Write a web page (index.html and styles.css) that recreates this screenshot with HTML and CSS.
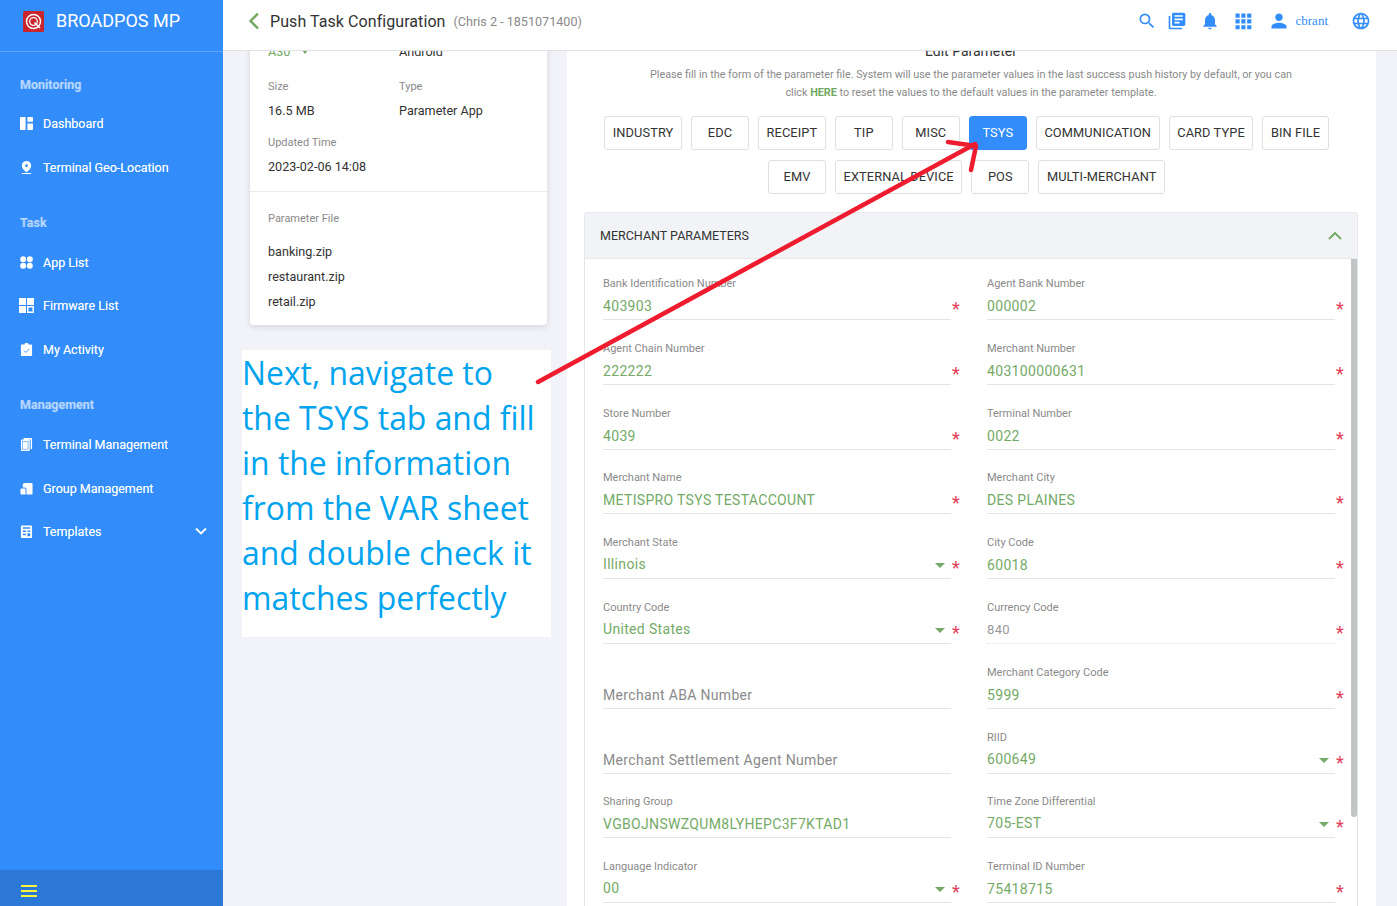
FILE: index.html
```html
<!DOCTYPE html>
<html lang="en">
<head>
<meta charset="utf-8">
<title>Push Task Configuration</title>
<link rel="stylesheet" href="styles.css">
</head>
<body>
<div class="app">
  <aside class="sidebar">
    <div class="brand">
      <svg class="logo" viewBox="0 0 21 21"><rect width="21" height="21" rx="1.5" fill="#c8262c"/><circle cx="10.5" cy="10.5" r="7" fill="none" stroke="#fff" stroke-width="1.5"/><circle cx="10.5" cy="10.5" r="3.8" fill="none" stroke="#fff" stroke-width="1.3"/><path d="M11.5 11.5l5.5 5.5" stroke="#fff" stroke-width="1.6"/></svg>
      <span class="brand-name">BROADPOS MP</span>
    </div>
    <nav class="nav">
      <div class="nav-section">Monitoring</div>
      <a class="nav-item"><svg class="nav-icon" viewBox="0 0 14 14"><path d="M0 1a1 1 0 0 1 1-1h5v14H1a1 1 0 0 1-1-1zM8 0h5a1 1 0 0 1 1 1v4H8zM8 7h6v6a1 1 0 0 1-1 1H8z"/></svg>Dashboard</a>
      <a class="nav-item"><svg class="nav-icon" viewBox="0 0 14 14"><path d="M7 0a5 5 0 0 1 5 5c0 3-3 5.500-5 7-2-1.500-5-4-5-7a5 5 0 0 1 5-5zm0 3.500a1.500 1.500 0 1 0 0 3 1.500 1.500 0 0 0 0-3zM2 12.800h10V14H2z"/></svg>Terminal Geo-Location</a>
      <div class="nav-section nav-gap">Task</div>
      <a class="nav-item"><svg class="nav-icon" viewBox="0 0 14 14"><circle cx="3.400" cy="3.400" r="3.200"/><circle cx="10.600" cy="3.400" r="3.200"/><circle cx="3.400" cy="10.600" r="3.200"/><circle cx="10.600" cy="10.600" r="3.200"/></svg>App List</a>
      <a class="nav-item"><svg class="nav-icon nav-icon-wide" viewBox="0 0 15 15"><path d="M0 0h7v7H0zM8 0h7v7H8zM0 8h7v7H0zM8 8h7v7H8zm1.500 1.500v4h4v-4z" fill-rule="evenodd"/></svg>Firmware List</a>
      <a class="nav-item"><svg class="nav-icon" viewBox="0 0 14 14"><path d="M2 1.500h3a2 2 0 0 1 4 0h3a1 1 0 0 1 1 1V13a1 1 0 0 1-1 1H2a1 1 0 0 1-1-1V2.500a1 1 0 0 1 1-1z"/><path d="M4.300 8.300l1.900 1.900 3.600-3.600" fill="none" stroke="#328dfb" stroke-width="1"/></svg>My Activity</a>
      <div class="nav-section nav-gap">Management</div>
      <a class="nav-item"><svg class="nav-icon" viewBox="0 0 14 14"><path d="M2 1.500h7.500a1 1 0 0 1 1 1V13a1 1 0 0 1-1 1H2a1 1 0 0 1-1-1V2.500a1 1 0 0 1 1-1zM4 0h8a1 1 0 0 1 1 1v11h-1.500V1.500H4z"/><rect x="2.800" y="3.500" width="5.900" height="8.500" fill="none" stroke="#328dfb" stroke-width=".6"/></svg>Terminal Management</a>
      <a class="nav-item"><svg class="nav-icon" viewBox="0 0 14 14"><path d="M5 1h7.500a1 1 0 0 1 1 1v10.500a1 1 0 0 1-1 1H7V8a2 2 0 0 0-2-2H3V3a2 2 0 0 1 2-2zM1.500 7H5a1 1 0 0 1 1 1v5.500H1.500a1 1 0 0 1-1-1V8a1 1 0 0 1 1-1z"/></svg>Group Management</a>
      <a class="nav-item"><svg class="nav-icon" viewBox="0 0 14 14"><path d="M2 .500h10a1 1 0 0 1 1 1V13a1 1 0 0 1-1 1H2a1 1 0 0 1-1-1V1.500a1 1 0 0 1 1-1zM3 2.500V4h8V2.500zM3 6v1.500h3.500V6zM8 6v1.500h3V6zM3 9.500V11h3.500V9.500zM8 9v3h3V9z" fill-rule="evenodd"/></svg>Templates<svg class="nav-caret" viewBox="0 0 12 8"><path d="M1 1.500l5 5 5-5" fill="none" stroke="#fff" stroke-width="1.800"/></svg></a>
    </nav>
    <div class="side-foot"><span class="burger"></span></div>
  </aside>

  <div class="page">
    <header class="topbar">
      <svg class="back" viewBox="0 0 12 18"><path d="M10 1.500L2.500 9l7.500 7.500" fill="none" stroke="#6fa85f" stroke-width="2.400"/></svg>
      <h1 class="title">Push Task Configuration</h1>
      <span class="subtitle">(Chris 2 - 1851071400)</span>
      <div class="tools">
        <svg class="tool tool-search" viewBox="0 0 24 24"><path d="M15.500 14h-.79l-.28-.27A6.470 6.470 0 0 0 16 9.500 6.500 6.500 0 1 0 9.500 16c1.610 0 3.090-.59 4.230-1.570l.27.28v.79l5 4.990L20.490 19l-4.990-5zm-6 0C7.010 14 5 11.990 5 9.500S7.010 5 9.500 5 14 7.010 14 9.500 11.990 14 9.500 14z"/></svg>
        <svg class="tool" viewBox="0 0 24 24"><path d="M4 6H2v14c0 1.100.9 2 2 2h14v-2H4V6zm16-4H8c-1.100 0-2 .9-2 2v12c0 1.100.9 2 2 2h12c1.100 0 2-.9 2-2V4c0-1.100-.9-2-2-2zm-1 9H9V9h10v2zm-4 4H9v-2h6v2zm4-8H9V5h10v2z"/></svg>
        <svg class="tool" viewBox="0 0 24 24"><path d="M12 22c1.100 0 2-.9 2-2h-4c0 1.100.9 2 2 2zm6-6v-5c0-3.070-1.630-5.640-4.500-6.320V4c0-.83-.67-1.500-1.500-1.500s-1.500.67-1.500 1.500v.68C7.640 5.360 6 7.920 6 11v5l-2 2v1h16v-1l-2-2z"/></svg>
        <svg class="tool" viewBox="0 0 24 24"><path d="M3 3h5v5H3zM10 3h5v5h-5zM17 3h5v5h-5zM3 10h5v5H3zM10 10h5v5h-5zM17 10h5v5h-5zM3 17h5v5H3zM10 17h5v5h-5zM17 17h5v5h-5z"/></svg>
        <svg class="tool tool-user" viewBox="0 0 24 24"><path d="M12 12c2.500 0 4.500-2 4.500-4.500S14.500 3 12 3 7.500 5 7.500 7.500 9.500 12 12 12zm0 2c-3 0-9 1.500-9 4.500V21h18v-2.500c0-3-6-4.500-9-4.500z"/></svg>
        <span class="username">cbrant</span>
        <svg class="tool" viewBox="0 0 24 24"><path d="M11.990 2C6.470 2 2 6.480 2 12s4.470 10 9.990 10C17.520 22 22 17.520 22 12S17.520 2 11.990 2zm6.930 6h-2.950a15.650 15.650 0 0 0-1.380-3.560A8.030 8.030 0 0 1 18.920 8zM12 4.040c.83 1.200 1.480 2.530 1.910 3.960h-3.820c.43-1.430 1.080-2.760 1.910-3.960zM4.260 14C4.100 13.360 4 12.690 4 12s.1-1.360.26-2h3.380c-.08.660-.14 1.320-.14 2s.06 1.340.14 2H4.260zm.82 2h2.950c.32 1.250.78 2.450 1.380 3.560A7.987 7.987 0 0 1 5.080 16zm2.950-8H5.080a7.987 7.987 0 0 1 4.330-3.560A15.650 15.650 0 0 0 8.030 8zM12 19.960c-.83-1.200-1.480-2.530-1.910-3.960h3.820c-.43 1.430-1.080 2.760-1.910 3.960zM14.340 14H9.660c-.09-.660-.16-1.320-.16-2s.07-1.350.16-2h4.680c.09.650.16 1.320.16 2s-.07 1.340-.16 2zm.25 5.560c.6-1.110 1.060-2.310 1.380-3.560h2.950a8.030 8.030 0 0 1-4.330 3.560zM16.360 14c.08-.660.14-1.320.14-2s-.06-1.340-.14-2h3.380c.16.640.26 1.310.26 2s-.1 1.360-.26 2h-3.380z"/></svg>
      </div>
    </header>

    <main class="content">
      <div class="columns">
        <div class="left-col">
          <section class="info-card">
            <div class="info-top">
              <div class="info-grid">
                <div class="info-cell info-cell-first"><span class="info-value info-green">A30 <i class="mini-caret"></i></span></div>
                <div class="info-cell info-cell-first"><span class="info-value">Android</span></div>
                <div class="info-cell"><span class="info-label">Size</span><span class="info-value">16.5 MB</span></div>
                <div class="info-cell"><span class="info-label">Type</span><span class="info-value">Parameter App</span></div>
                <div class="info-cell"><span class="info-label">Updated Time</span><span class="info-value">2023-02-06 14:08</span></div>
              </div>
            </div>
            <div class="info-files">
              <span class="info-label">Parameter File</span>
              <ul class="file-list">
                <li>banking.zip</li>
                <li>restaurant.zip</li>
                <li>retail.zip</li>
              </ul>
            </div>
          </section>
          <div class="note">Next, navigate to<br>the TSYS tab and fill<br>in the information<br>from the VAR sheet<br>and double check it<br>matches perfectly</div>
        </div>

        <section class="edit-card">
          <h2 class="edit-title">Edit Parameter</h2>
          <p class="edit-desc">Please fill in the form of the parameter file. System will use the parameter values in the last success push history by default, or you can<br>click <b class="here">HERE</b> to reset the values to the default values in the parameter template.</p>
          <div class="tabs">
            <button class="tab">INDUSTRY</button><button class="tab">EDC</button><button class="tab">RECEIPT</button><button class="tab">TIP</button><button class="tab">MISC</button><button class="tab tab-active">TSYS</button><button class="tab">COMMUNICATION</button><button class="tab">CARD TYPE</button><button class="tab">BIN FILE</button><button class="tab">EMV</button><button class="tab">EXTERNAL DEVICE</button><button class="tab">POS</button><button class="tab">MULTI-MERCHANT</button>
          </div>
          <div class="acc-head">
            <span>MERCHANT PARAMETERS</span>
            <svg class="acc-chevron" viewBox="0 0 14 9"><path d="M1 8l6-6 6 6" fill="none" stroke="#6fa85f" stroke-width="1.800"/></svg>
          </div>
          <div class="acc-body">
            <div class="scrollbar"></div>
            <div class="form">
              <div class="field"><label>Bank Identification Number</label><div class="ctl"><div class="val">403903</div><span class="req">*</span></div></div>
              <div class="field"><label>Agent Bank Number</label><div class="ctl"><div class="val">000002</div><span class="req">*</span></div></div>
              <div class="field"><label>Agent Chain Number</label><div class="ctl"><div class="val">222222</div><span class="req">*</span></div></div>
              <div class="field"><label>Merchant Number</label><div class="ctl"><div class="val">403100000631</div><span class="req">*</span></div></div>
              <div class="field"><label>Store Number</label><div class="ctl"><div class="val">4039</div><span class="req">*</span></div></div>
              <div class="field"><label>Terminal Number</label><div class="ctl"><div class="val">0022</div><span class="req">*</span></div></div>
              <div class="field"><label>Merchant Name</label><div class="ctl"><div class="val">METISPRO TSYS TESTACCOUNT</div><span class="req">*</span></div></div>
              <div class="field"><label>Merchant City</label><div class="ctl"><div class="val">DES PLAINES</div><span class="req">*</span></div></div>
              <div class="field"><label>Merchant State</label><div class="ctl"><div class="val val-select">Illinois<i class="caret"></i></div><span class="req">*</span></div></div>
              <div class="field"><label>City Code</label><div class="ctl"><div class="val">60018</div><span class="req">*</span></div></div>
              <div class="field"><label>Country Code</label><div class="ctl"><div class="val val-select">United States<i class="caret"></i></div><span class="req">*</span></div></div>
              <div class="field"><label>Currency Code</label><div class="ctl"><div class="val val-disabled">840</div><span class="req">*</span></div></div>
              <div class="field"><label></label><div class="ctl"><div class="val val-empty">Merchant ABA Number</div><span class="req"></span></div></div>
              <div class="field"><label>Merchant Category Code</label><div class="ctl"><div class="val">5999</div><span class="req">*</span></div></div>
              <div class="field"><label></label><div class="ctl"><div class="val val-empty">Merchant Settlement Agent Number</div><span class="req"></span></div></div>
              <div class="field"><label>RIID</label><div class="ctl"><div class="val val-select">600649<i class="caret"></i></div><span class="req">*</span></div></div>
              <div class="field"><label>Sharing Group</label><div class="ctl"><div class="val">VGBOJNSWZQUM8LYHEPC3F7KTAD1</div><span class="req"></span></div></div>
              <div class="field"><label>Time Zone Differential</label><div class="ctl"><div class="val val-select">705-EST<i class="caret"></i></div><span class="req">*</span></div></div>
              <div class="field"><label>Language Indicator</label><div class="ctl"><div class="val val-select">00<i class="caret"></i></div><span class="req">*</span></div></div>
              <div class="field"><label>Terminal ID Number</label><div class="ctl"><div class="val">75418715</div><span class="req">*</span></div></div>
            </div>
          </div>
        </section>
      </div>
    </main>
  </div>

  <svg class="arrow" viewBox="0 0 1397 906" aria-hidden="true">
    <path d="M538 382L975 144M948 142L976 146M976 146L971 170" fill="none" stroke="#ee1c2e" stroke-width="4.500" stroke-linecap="round"/>
  </svg>
</div>
</body>
</html>
```
FILE: styles.css
```css
* { box-sizing: border-box; }
html, body { margin: 0; height: 100%; overflow: hidden; }
body { font-family: Roboto, "Liberation Sans", sans-serif; color: #333; background: #f2f3f8; }
.app { position: relative; display: flex; width: 1397px; height: 906px; overflow: hidden; }

/* Sidebar */
.sidebar { width: 223px; flex: none; display: flex; flex-direction: column; background: #328dfb; color: #fff; }
.brand { height: 52px; flex: none; display: flex; align-items: center; padding: 0 0 9px 23px; border-bottom: 1px solid rgba(255,255,255,.22); }
.logo { width: 21px; height: 21px; flex: none; }
.brand-name { margin-left: 12px; font-size: 18px; line-height: 22px; }
.nav { flex: 1; padding-top: 14px; }
.nav-section { height: 36px; display: flex; align-items: center; padding-left: 20px; font-size: 12.5px; font-weight: 700; color: rgba(255,255,255,.5); text-shadow: 0 0 1px rgba(255,255,255,.35); }
.nav-gap { margin-top: 16px; }
.nav-item { height: 43.4px; display: flex; align-items: center; padding-left: 20px; font-size: 12.5px; color: #fff; text-shadow: 0 0 .5px rgba(255,255,255,.6); }
.nav-icon { width: 13px; height: 13px; flex: none; margin-right: 10px; fill: #fff; }
.nav-icon-wide { width: 15px; height: 15px; margin-left: -1px; margin-right: 9px; }
.nav-caret { width: 12px; height: 8px; margin-left: auto; margin-right: 16px; }
.side-foot { height: 36px; flex: none; display: flex; align-items: center; padding: 6px 0 0 21px; background: #2b78d6; }
.burger { display: block; width: 16px; height: 12px; background: linear-gradient(#f4f53c 0 2px, transparent 2px 5px, #f4f53c 5px 7px, transparent 7px 10px, #f4f53c 10px 12px); }

/* Header */
.page { flex: 1; min-width: 0; display: flex; flex-direction: column; }
.topbar { position: relative; z-index: 2; height: 51px; flex: none; display: flex; align-items: center; padding: 0 26px 8px 25px; background: #fff; border-bottom: 1px solid #dfe1e6; }
.back { width: 12px; height: 18px; flex: none; }
.title { margin: 0 0 0 10px; font-size: 16px; font-weight: 400; letter-spacing: .07px; color: #333; }
.subtitle { margin-left: 8px; font-size: 12.6px; color: #8a8a8a; }
.tools { margin-left: auto; display: flex; align-items: center; gap: 13px; }
.tool { width: 20px; height: 20px; flex: none; fill: #328dfb; }
.tool-search { margin-right: -3px; }
.tool-user { margin-left: 3px; }
.username { margin-left: -6px; margin-right: 10px; font-family: "Liberation Serif", serif; font-size: 13px; color: #328dfb; }

/* Content */
.content { flex: 1; min-height: 0; overflow: hidden; padding-left: 19px; }
.columns { display: flex; align-items: flex-start; gap: 16px; margin-top: -26px; }
.left-col { width: 309px; flex: none; }
.info-card { margin: -1px 4px 25px 8px; background: #fff; border-radius: 4px; box-shadow: 0 2px 6px rgba(0,0,0,.12); }
.info-top { padding: 0 18px; border-bottom: 1px solid #ececec; }
.info-grid { display: grid; grid-template-columns: 131px 1fr; grid-auto-rows: 56px; margin-bottom: -1px; }
.info-cell { display: flex; flex-direction: column; }
.info-cell-first { padding-top: 11px; }
.info-label { font-size: 11px; line-height: 14px; color: #8a8a8a; }
.info-value { margin-top: 7.5px; font-size: 12.6px; line-height: 17px; color: #333; }
.info-green { color: #6fa85f; }
.mini-caret { display: inline-block; margin: 0 0 2px 8px; border: 3px solid transparent; border-top: 4px solid #6fa85f; border-bottom: 0; }
.info-files { padding: 15px 18px 11px; }
.file-list { list-style: none; margin: 13px 0 0; padding: 0; }
.file-list li { font-size: 12.6px; line-height: 25px; color: #333; }
.note { width: 309px; height: 287px; background: #fff; font-family: "Open Sans", "Noto Sans", sans-serif; font-size: 31.9px; line-height: 45px; color: #00a3ee; }

/* Edit card */
.edit-card { width: 809px; flex: none; height: 1000px; padding: 0 18px 0 17px; background: #fff; }
.edit-title { margin: 0; padding-top: 17px; text-align: center; font-size: 14px; line-height: 18px; font-weight: 400; color: #333; }
.edit-desc { margin: 6px 0 0; text-align: center; font-size: 10.8px; line-height: 18px; color: #8a8a8a; }
.here { color: #6fa85f; }
.tabs { width: 765px; margin-top: 14px; display: flex; flex-wrap: wrap; justify-content: center; gap: 10px 9px; padding: 0 19px; }
.tab { min-width: 58px; height: 34px; padding: 0 7.6px 2px; border: 1px solid #dcdfe3; border-radius: 3px; background: #fff; font-family: inherit; font-size: 12.8px; letter-spacing: .1px; color: #333; }
.tab-active { background: #328dfb; border-color: #328dfb; color: #fff; }
.acc-head { height: 47px; margin-top: 18px; display: flex; align-items: center; justify-content: space-between; padding: 0 15px; background: #f2f3f7; border: 1px solid #e6e8ec; border-radius: 3px 3px 0 0; font-size: 12.5px; color: #333; }
.acc-chevron { width: 14px; height: 9px; }
.acc-body { position: relative; padding: 13px 14px 0 18px; border: 1px solid #dfe6e4; border-top: 0; }
.scrollbar { position: absolute; top: 0; right: 0; width: 6px; height: 558px; background: #c2c5c6; border-radius: 0 0 3px 3px; }
.form { display: grid; grid-template-columns: 357px 357px; column-gap: 27px; grid-auto-rows: 64.8px; }
.field { display: flex; flex-direction: column; }
.field label { height: 23px; flex: none; font-size: 11px; line-height: 23px; color: #8a8a8a; }
.ctl { display: flex; align-items: center; }
.val { position: relative; flex: 1; min-width: 0; height: 25px; border-bottom: 1px solid #e3e4e6; font-size: 14px; line-height: 22px; letter-spacing: .33px; color: #74aa66; }
.val-disabled { color: #9a9a9a; font-size: 13px; border-bottom-style: dotted; }
.val-empty { color: #8a8a8a; }
.val-select { line-height: 20px; }
.caret { position: absolute; right: 6px; top: 9px; border: 5px solid transparent; border-top: 5px solid #74aa66; border-bottom: 0; }
.req { width: 9px; flex: none; padding-left: 1px; height: 25px; font-size: 18px; line-height: 28px; color: #e0405a; }

/* Annotation arrow */
.arrow { position: absolute; inset: 0; width: 1397px; height: 906px; pointer-events: none; z-index: 5; }
```
